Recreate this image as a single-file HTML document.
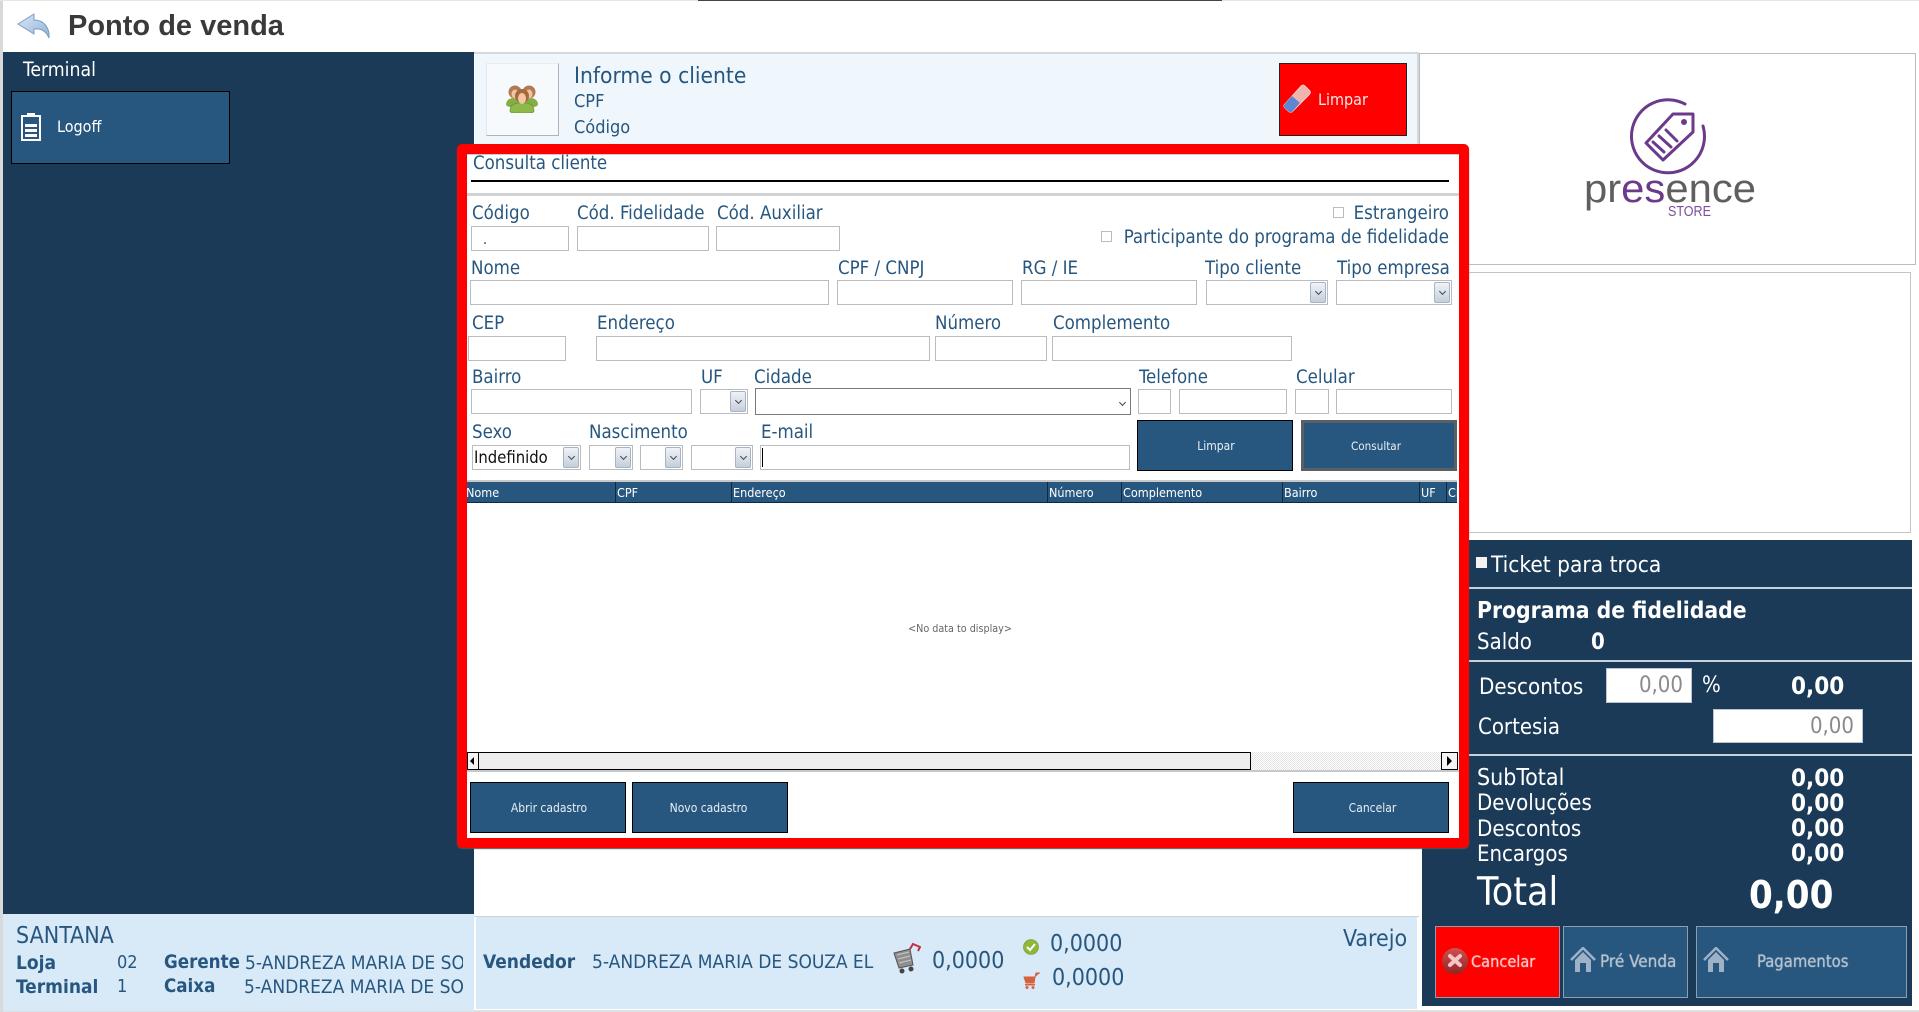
<!DOCTYPE html>
<html lang="pt-BR"><head><meta charset="utf-8"><title>Ponto de venda</title>
<style>
html,body{margin:0;padding:0;width:1919px;height:1012px;overflow:hidden;background:#fff}
*{box-sizing:border-box}
body{position:relative;font-family:"DejaVu Sans Condensed","Liberation Sans",sans-serif;font-stretch:condensed}
div,span,svg{position:absolute}
.t{white-space:nowrap;line-height:24px;height:24px}
.l{white-space:nowrap;line-height:24px;height:24px;color:#27577f;font-size:18.5px;margin-top:1px}
.f{background:#fff;border:1px solid #b9bdc1}
.s{background:#fff;border:1px solid #b9bdc1}
.s::after{content:"";position:absolute;right:1px;top:1px;bottom:1px;width:14px;border:1px solid #a8b4c2;border-radius:2px;background:linear-gradient(#f0f3f7,#c4cfdb)}
.s::before{content:"";position:absolute;z-index:2;right:6px;top:8px;width:4px;height:4px;border-right:1px solid #445;border-bottom:1px solid #445;transform:rotate(45deg)}
.b{background:#27577f;border:1px solid #000;color:#e8eef4;font-size:12px;text-align:center;white-space:nowrap}
.w{color:#fff}
.g{height:2px;left:1469px;width:443px;background:#c5d1dd}
.h{color:#fff;font-size:12.5px;line-height:21px;top:482px;white-space:nowrap}
.sep{top:482px;height:21px;width:1px;background:#0d2a44}
.v{color:#fff;font-weight:bold;font-size:24px;white-space:nowrap;line-height:28px;height:28px}
.bt{text-shadow:0 0 1px currentColor}
</style></head><body>

<!-- frame -->
<div style="left:0;top:0;width:3px;height:1012px;background:#d9d9d9"></div>
<div style="left:0;top:0;width:1919px;height:1px;background:#e6e6e6"></div>
<div style="left:698px;top:0;width:524px;height:1px;background:#444"></div>
<div style="left:3px;top:1010px;width:1916px;height:2px;background:#e0e0e0"></div>

<!-- title -->
<svg style="left:16px;top:12px" width="36" height="28" viewBox="0 0 36 28"><defs><linearGradient id="a" x1="0" y1="0" x2="1" y2="1"><stop offset="0" stop-color="#dbe8f6"/><stop offset="1" stop-color="#8fb2d8"/></linearGradient></defs><path d="M2 12 L18 2 L18 8 C28 8 34 16 33 26 C30 19 25 16 18 17 L18 22 Z" fill="url(#a)" stroke="#7c9dc2" stroke-width="1"/></svg>
<div class="t" style="left:68px;top:12px;font:bold 29px/28px 'Liberation Sans',sans-serif;height:28px;color:#3a3a3a">Ponto de venda</div>

<!-- left nav -->
<div style="left:3px;top:52px;width:471px;height:862px;background:#1b3a57"></div>
<div class="t w" style="left:23px;top:58px;font-size:19.3px">Terminal</div>
<div style="left:11px;top:91px;width:219px;height:73px;background:#27577f;border:1px solid #000"></div>
<svg style="left:20px;top:112px" width="22" height="29" viewBox="0 0 22 29"><rect x="2" y="4" width="18" height="24" fill="none" stroke="#fff" stroke-width="2"/><rect x="7" y="1" width="8" height="4" fill="#fff"/><rect x="5" y="12" width="12" height="3" fill="#fff"/><rect x="5" y="17" width="12" height="3" fill="#fff"/><rect x="5" y="22" width="12" height="3" fill="#fff"/></svg>
<div class="t w" style="left:57px;top:115px;font-size:16px">Logoff</div>

<!-- client panel -->
<div style="left:474px;top:52px;width:945px;height:2px;background:#d5d8db"></div>
<div style="left:475px;top:54px;width:942px;height:100px;background:#eff7fd"></div>
<div style="left:1417px;top:52px;width:2px;height:100px;background:#d5d8db"></div>
<div style="left:486px;top:63px;width:73px;height:73px;background:#f7fafd;border-right:1px solid #a9b4bf;border-bottom:1px solid #a9b4bf;border-left:1px solid #e3e8ed;border-top:1px solid #e9edf1"></div>
<svg style="left:505px;top:85px" width="34" height="28" viewBox="0 0 34 28"><path d="M1 19 Q2 13 9 13 L25 13 Q32 13 33 19 Q33 22 27 22 L7 22 Q1 22 1 19Z" fill="#86ad43"/><path d="M5 26 Q5 19 13 18 L21 18 Q29 19 29 26 Q29 28 24 28 L10 28 Q5 28 5 26Z" fill="#8fb84b" stroke="#6b9333" stroke-width=".7"/><circle cx="10" cy="7" r="6.5" fill="#b37a52"/><circle cx="24" cy="7" r="6.5" fill="#b37a52"/><ellipse cx="10" cy="9" rx="3.5" ry="4.5" fill="#eec4a2"/><ellipse cx="24" cy="9" rx="3.5" ry="4.5" fill="#eec4a2"/><circle cx="17" cy="11" r="7" fill="#a8683d"/><ellipse cx="17" cy="13.5" rx="4" ry="5.5" fill="#f2c6a0"/></svg>
<div class="t" style="left:574px;top:64px;font-size:22.6px;color:#27577f">Informe o cliente</div>
<div class="t" style="left:574px;top:90px;font-size:18px;color:#27577f">CPF</div>
<div class="t" style="left:574px;top:116px;font-size:18px;color:#27577f">Código</div>
<div style="left:1279px;top:63px;width:128px;height:73px;background:#f00;border:1px solid #222"></div>
<svg style="left:1283px;top:84px" width="28" height="29" viewBox="0 0 28 29"><path d="M1 21 L18 2 Q20 0 22 2 L27 7 Q28 9 26 11 L9 28 Q7 29 5 27 L2 24 Q0 22 1 21Z" fill="#eeb4ae" stroke="#f6dcdc" stroke-width=".8"/><path d="M1 21 L9 12 L17 19 L9 28 Q7 29 5 27 L2 24 Q0 22 1 21Z" fill="#5f86d0"/></svg>
<div class="t" style="left:1318px;top:88px;font-size:16px;color:#f4e8e8">Limpar</div>

<!-- logo -->
<div style="left:1419px;top:53px;width:497px;height:212px;background:#fff;border:1px solid #bcbcbc"></div>
<svg style="left:1570px;top:90px" width="200" height="135" viewBox="1570 90 200 135">
<path d="M1685 104 A36.5 36.5 0 1 0 1703 126" fill="none" stroke="#6b3a8a" stroke-width="3" stroke-linecap="round"/>
<path d="M1673 114 L1693 114 L1693 132 L1663 160 L1646 143 Z" fill="none" stroke="#6b3a8a" stroke-width="3" stroke-linejoin="round"/>
<circle cx="1684" cy="122" r="3" fill="#6b3a8a"/>
<path d="M1666 130 L1677 141 M1659 136 L1671 147 M1653 142 L1664 152" stroke="#6b3a8a" stroke-width="3" stroke-linecap="round"/>
<text x="1584" y="202" font-family="Liberation Sans,sans-serif" font-size="40" textLength="172" lengthAdjust="spacingAndGlyphs" fill="#5f5f5f">pr<tspan fill="#6b3a8a">es</tspan>ence</text>
<text x="1668" y="216" font-family="Liberation Sans,sans-serif" font-size="14.5" textLength="43" lengthAdjust="spacingAndGlyphs" fill="#7d4f9a">STORE</text>
</svg>
<div style="left:1419px;top:272px;width:492px;height:261px;background:#fff;border:1px solid #c4c4c4"></div>

<!-- right totals -->
<div style="left:1422px;top:540px;width:490px;height:466px;background:#1b3a57"></div>
<div style="left:1476px;top:557px;width:11px;height:11px;background:#f2f2f2"></div>
<div class="t w" style="left:1491px;top:553px;font-size:22.5px">Ticket para troca</div>
<div class="g" style="top:587px"></div>
<div class="t w" style="left:1477px;top:599px;font-size:22.7px;font-weight:bold">Programa de fidelidade</div>
<div class="t w" style="left:1477px;top:631px;font-size:22px">Saldo</div>
<div class="t w" style="left:1591px;top:631px;font-size:22px;font-weight:bold">0</div>
<div class="g" style="top:660px"></div>
<div class="t w" style="left:1479px;top:675px;font-size:22.2px">Descontos</div>
<div style="left:1606px;top:668px;width:86px;height:35px;background:#fff;border:1px solid #b9c4d0"></div>
<div class="t" style="left:1606px;width:77px;text-align:right;top:674px;font-size:22px;color:#8a8a8a">0,00</div>
<div class="t w" style="left:1702px;top:674px;font-size:22px">%</div>
<div class="v" style="left:1791px;top:672px">0,00</div>
<div class="t w" style="left:1478px;top:716px;font-size:22px">Cortesia</div>
<div style="left:1713px;top:709px;width:150px;height:34px;background:#fff;border:1px solid #b9c4d0"></div>
<div class="t" style="left:1713px;width:141px;text-align:right;top:715px;font-size:22px;color:#8a8a8a">0,00</div>
<div class="g" style="top:754px"></div>
<div class="t w" style="left:1477px;top:766px;font-size:23px">SubTotal</div><div class="v" style="left:1791px;top:764px">0,00</div>
<div class="t w" style="left:1477px;top:792px;font-size:22px">Devoluções</div><div class="v" style="left:1791px;top:789px">0,00</div>
<div class="t w" style="left:1477px;top:817px;font-size:22.2px">Descontos</div><div class="v" style="left:1791px;top:814px">0,00</div>
<div class="t w" style="left:1477px;top:843px;font-size:22px">Encargos</div><div class="v" style="left:1791px;top:839px">0,00</div>
<div class="t w" style="left:1477px;top:871px;height:44px;line-height:44px;font-size:39px">Total</div>
<div class="t w" style="left:1749px;top:871px;height:48px;line-height:48px;font-size:38px;font-weight:bold">0,00</div>

<div style="left:1435px;top:926px;width:125px;height:72px;background:#f00;border:1px solid #8d9eae"></div>
<svg style="left:1441px;top:947px" width="28" height="28" viewBox="0 0 28 28"><defs><linearGradient id="c" x1="0" y1="0" x2="0" y2="1"><stop offset="0" stop-color="#d05050"/><stop offset="1" stop-color="#8e2626"/></linearGradient></defs><circle cx="14" cy="14" r="13" fill="url(#c)"/><path d="M9 9 L19 18 M19 9 L9 18" stroke="#f6c4c4" stroke-width="4" stroke-linecap="round"/></svg>
<div class="t bt" style="left:1471px;top:950px;font-size:16.2px;color:#f9c8c8">Cancelar</div>
<div style="left:1563px;top:926px;width:125px;height:72px;background:#27577f;border:1px solid #8d9eae"></div>
<svg style="left:1570px;top:947px" width="26" height="26" viewBox="0 0 26 26"><path d="M1 13 L13 1 L25 13" fill="none" stroke="#9db2c6" stroke-width="2.5"/><path d="M5 13 L13 5 L21 13 L21 25 L16 25 L16 16 L10 16 L10 25 L5 25 Z" fill="#9db2c6"/></svg>
<div class="t bt" style="left:1600px;top:950px;font-size:17px;color:#b7c3cf">Pré Venda</div>
<div style="left:1696px;top:926px;width:211px;height:72px;background:#27577f;border:1px solid #8d9eae"></div>
<svg style="left:1703px;top:947px" width="26" height="26" viewBox="0 0 26 26"><path d="M1 13 L13 1 L25 13" fill="none" stroke="#9db2c6" stroke-width="2.5"/><path d="M5 13 L13 5 L21 13 L21 25 L16 25 L16 16 L10 16 L10 25 L5 25 Z" fill="#9db2c6"/></svg>
<div class="t bt" style="left:1757px;top:950px;font-size:16.5px;color:#b7c3cf">Pagamentos</div>

<!-- bottom left -->
<div style="left:3px;top:914px;width:471px;height:97px;background:#d8e9f8"></div>
<div class="t" style="left:16px;top:924px;font-size:23px;color:#27577f">SANTANA</div>
<div class="t" style="left:16px;top:951px;font-size:19px;font-weight:bold;color:#27577f">Loja</div>
<div class="t" style="left:117px;top:951px;font-size:18px;color:#27577f">02</div>
<div class="t" style="left:164px;top:951px;font-size:18.6px;font-weight:bold;color:#27577f">Gerente</div>
<div class="t" style="left:245px;top:951px;width:218px;overflow:hidden;font-size:19px;color:#27577f">5-ANDREZA MARIA DE SOUZA EL</div>
<div class="t" style="left:16px;top:975px;font-size:19px;font-weight:bold;color:#27577f">Terminal</div>
<div class="t" style="left:117px;top:975px;font-size:18px;color:#27577f">1</div>
<div class="t" style="left:164px;top:975px;font-size:18.6px;font-weight:bold;color:#27577f">Caixa</div>
<div class="t" style="left:244px;top:975px;width:219px;overflow:hidden;font-size:19px;color:#27577f">5-ANDREZA MARIA DE SOUZA EL</div>

<!-- bottom mid -->
<div style="left:474px;top:916px;width:945px;height:1px;background:#d0d4d8"></div>
<div style="left:476px;top:917px;width:941px;height:92px;background:#d8e9f8"></div>
<div class="t" style="left:483px;top:950px;font-size:19px;font-weight:bold;color:#27577f">Vendedor</div>
<div class="t" style="left:592px;top:950px;font-size:19px;color:#27577f">5-ANDREZA MARIA DE SOUZA EL</div>
<svg style="left:893px;top:942px" width="28" height="32" viewBox="0 0 28 32"><path d="M1 11 L17 7 L20 23 L6 26 Z" fill="#8f8f8f" stroke="#555"/><path d="M4 13 L16 10 M5 17 L17 14 M6 21 L18 18" stroke="#c9c9c9"/><path d="M17 7 L20 2 L27 5 L25 9" fill="none" stroke="#c03040" stroke-width="2"/><circle cx="9" cy="29" r="2.5" fill="#444"/><circle cx="18" cy="27" r="2.5" fill="#444"/></svg>
<div class="t" style="left:932px;top:949px;font-size:23px;color:#27577f">0,0000</div>
<svg style="left:1023px;top:939px" width="16" height="16" viewBox="0 0 16 16"><circle cx="8" cy="8" r="7.5" fill="#8eb83a" stroke="#6f9628" stroke-width=".6"/><path d="M4 8 L7 11 L12 5" fill="none" stroke="#fff" stroke-width="2"/></svg>
<div class="t" style="left:1050px;top:932px;font-size:23px;color:#27577f">0,0000</div>
<svg style="left:1023px;top:972px" width="18" height="17" viewBox="0 0 18 17"><path d="M17 1 L13 1 L12 5 L1 5 L3 11 L11 11 L12 5" fill="#d9603c" stroke="#d9603c"/><rect x="2" y="12" width="10" height="1.5" fill="#d9603c"/><circle cx="4" cy="15.5" r="1.5" fill="#d9603c"/><circle cx="10" cy="15.5" r="1.5" fill="#d9603c"/></svg>
<div class="t" style="left:1052px;top:966px;font-size:23px;color:#27577f">0,0000</div>
<div class="t" style="left:1343px;top:927px;font-size:23px;color:#27577f">Varejo</div>

<!-- modal -->
<div style="left:457px;top:144px;width:1012px;height:704px;background:#fff;border:10px solid #f00;border-radius:5px;box-shadow:0 1px 1px #555"></div>
<div style="left:467px;top:154px;width:992px;height:1px;background:#ccc"></div>
<div class="t" style="left:473px;top:152px;font-size:18.5px;color:#27577f">Consulta cliente</div>
<div style="left:471px;top:180px;width:978px;height:2px;background:#000"></div>
<div style="left:467px;top:193px;width:992px;height:3px;background:#d2d2d2"></div>

<div class="l" style="left:472px;top:201px">Código</div>
<div class="l" style="left:577px;top:201px">Cód. Fidelidade</div>
<div class="l" style="left:717px;top:201px">Cód. Auxiliar</div>
<div class="f" style="left:471px;top:226px;width:98px;height:25px"></div>
<div class="t" style="left:483px;top:228px;font-size:14px;color:#333">.</div>
<div class="f" style="left:577px;top:226px;width:132px;height:25px"></div>
<div class="f" style="left:716px;top:226px;width:124px;height:25px"></div>
<div style="left:1333px;top:207px;width:11px;height:11px;border:1px solid #b9bdc1"></div>
<div class="l" style="right:470px;top:201px">Estrangeiro</div>
<div style="left:1101px;top:231px;width:11px;height:11px;border:1px solid #b9bdc1"></div>
<div class="l" style="right:470px;top:225px">Participante do programa de fidelidade</div>

<div class="l" style="left:471px;top:256px">Nome</div>
<div class="l" style="left:838px;top:256px">CPF / CNPJ</div>
<div class="l" style="left:1022px;top:256px">RG / IE</div>
<div class="l" style="left:1205px;top:256px">Tipo cliente</div>
<div class="l" style="left:1337px;top:256px">Tipo empresa</div>
<div class="f" style="left:470px;top:280px;width:359px;height:25px"></div>
<div class="f" style="left:837px;top:280px;width:176px;height:25px"></div>
<div class="f" style="left:1021px;top:280px;width:176px;height:25px"></div>
<div class="s" style="left:1206px;top:280px;width:122px;height:25px"></div>
<div class="s" style="left:1336px;top:280px;width:116px;height:25px"></div>

<div class="l" style="left:472px;top:311px">CEP</div>
<div class="l" style="left:597px;top:311px">Endereço</div>
<div class="l" style="left:935px;top:311px">Número</div>
<div class="l" style="left:1053px;top:311px">Complemento</div>
<div class="f" style="left:468px;top:336px;width:98px;height:25px"></div>
<div class="f" style="left:596px;top:336px;width:334px;height:25px"></div>
<div class="f" style="left:935px;top:336px;width:112px;height:25px"></div>
<div class="f" style="left:1052px;top:336px;width:240px;height:25px"></div>

<div class="l" style="left:472px;top:365px">Bairro</div>
<div class="l" style="left:701px;top:365px">UF</div>
<div class="l" style="left:754px;top:365px">Cidade</div>
<div class="l" style="left:1139px;top:365px">Telefone</div>
<div class="l" style="left:1296px;top:365px">Celular</div>
<div class="f" style="left:471px;top:389px;width:221px;height:25px"></div>
<div class="s" style="left:700px;top:389px;width:48px;height:25px"></div>
<div style="left:755px;top:388px;width:376px;height:27px;background:#fff;border:1px solid #7a7a7a"></div>
<div style="left:1120px;top:400px;width:5px;height:5px;border-right:1px solid #444;border-bottom:1px solid #444;transform:rotate(45deg)"></div>
<div class="f" style="left:1138px;top:389px;width:33px;height:25px"></div>
<div class="f" style="left:1179px;top:389px;width:108px;height:25px"></div>
<div class="f" style="left:1295px;top:389px;width:34px;height:25px"></div>
<div class="f" style="left:1336px;top:389px;width:116px;height:25px"></div>

<div class="l" style="left:472px;top:420px">Sexo</div>
<div class="l" style="left:589px;top:420px">Nascimento</div>
<div class="l" style="left:761px;top:420px">E-mail</div>
<div class="s" style="left:472px;top:445px;width:109px;height:25px"></div>
<div class="t" style="left:474px;top:446px;font-size:16.5px;color:#111">Indefinido</div>
<div class="s" style="left:589px;top:445px;width:44px;height:25px"></div>
<div class="s" style="left:640px;top:445px;width:43px;height:25px"></div>
<div class="s" style="left:691px;top:445px;width:62px;height:25px"></div>
<div class="f" style="left:760px;top:445px;width:370px;height:25px"></div>
<div style="left:762px;top:448px;width:1px;height:19px;background:#000"></div>
<div class="b" style="left:1137px;top:420px;width:156px;height:51px;line-height:51px;padding-left:2px">Limpar</div>
<div class="b" style="left:1301px;top:420px;width:156px;height:51px;line-height:47px;border:3px solid #5a5f64;padding-right:6px;font-size:11.6px">Consultar</div>

<!-- grid -->
<div style="left:467px;top:480px;width:990px;height:2px;background:#c8c8c8"></div>
<div style="left:467px;top:482px;width:990px;height:21px;background:#27577f;border-bottom:1px solid #0d2a44"></div>
<div class="sep" style="left:615px"></div><div class="sep" style="left:731px"></div><div class="sep" style="left:1047px"></div><div class="sep" style="left:1121px"></div><div class="sep" style="left:1282px"></div><div class="sep" style="left:1419px"></div><div class="sep" style="left:1446px"></div>
<div style="left:467px;top:482px;width:148px;height:21px;overflow:hidden"><div class="h" style="left:-1px;top:0">Nome</div></div>
<div class="h" style="left:617px">CPF</div>
<div class="h" style="left:733px">Endereço</div>
<div class="h" style="left:1049px">Número</div>
<div class="h" style="left:1123px">Complemento</div>
<div class="h" style="left:1284px">Bairro</div>
<div class="h" style="left:1421px">UF</div>
<div style="left:1447px;top:482px;width:10px;height:21px;overflow:hidden"><div class="h" style="left:1px;top:0">Cidade</div></div>
<div class="t" style="left:860px;width:200px;text-align:center;top:617px;font-size:10.7px;color:#666">&lt;No data to display&gt;</div>

<!-- scrollbar -->
<div style="left:467px;top:752px;width:991px;height:18px;background:repeating-conic-gradient(#e4e4e4 0 25%,#fff 0 50%) 0 0/2px 2px"></div>
<div style="left:467px;top:752px;width:12px;height:18px;background:#f4f4f4;border:1px solid #000"></div>
<div style="left:470px;top:757px;width:0;height:0;border-top:4px solid transparent;border-bottom:4px solid transparent;border-right:4px solid #000"></div>
<div style="left:479px;top:752px;width:772px;height:18px;background:#eee;border:1px solid #000;border-left:none"></div>
<div style="left:1441px;top:752px;width:17px;height:18px;background:#f4f4f4;border:1px solid #000"></div>
<div style="left:1447px;top:756px;width:0;height:0;border-top:5px solid transparent;border-bottom:5px solid transparent;border-left:5px solid #000"></div>
<div style="left:467px;top:770px;width:992px;height:2px;background:#c8c8c8"></div>

<div class="b" style="left:470px;top:782px;width:156px;height:51px;line-height:51px;padding-left:2px">Abrir cadastro</div>
<div class="b" style="left:632px;top:782px;width:156px;height:51px;line-height:51px;padding-right:3px">Novo cadastro</div>
<div class="b" style="left:1293px;top:782px;width:156px;height:51px;line-height:51px;padding-left:3px">Cancelar</div>
</body></html>
